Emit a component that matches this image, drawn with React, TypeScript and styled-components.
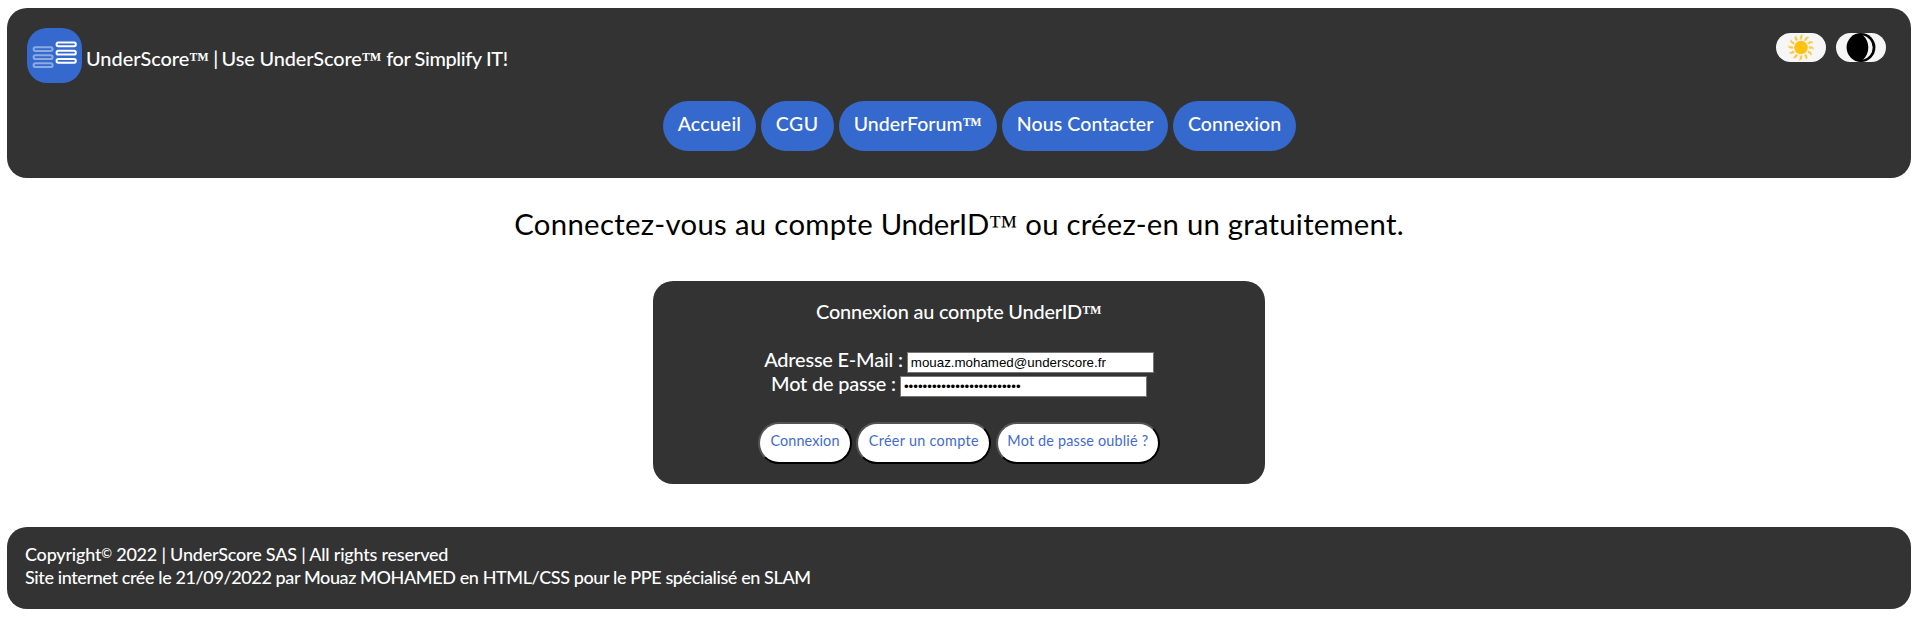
import React from "react";
import styled, { createGlobalStyle } from "styled-components";

const GlobalStyle = createGlobalStyle`
  * { box-sizing: border-box; }
  body { margin: 0; background: #fff; overflow: hidden; }
  body, button { font-family: Lato, "Liberation Sans", sans-serif; }
`;

const Page = styled.div`
  display: flex;
  flex-direction: column;
  padding: 8px 7px 0;
`;

const Panel = styled.section`
  background: #333;
  color: #fff;
  border-radius: 20px;
  font-weight: 500;
`;

const Header = styled(Panel)`
  height: 170px;
  padding: 20px 25px 0 20px;
`;

const TopRow = styled.div`
  display: flex;
  align-items: flex-start;
  height: 55px;
`;

const Title = styled.div`
  flex: 1;
  padding: 10px 0 0 4px;
  font-size: 19.9px;
  line-height: 40px;
  white-space: pre;
`;

const Spaced = styled.span<{ $ls: number }>`
  letter-spacing: ${(p) => p.$ls}px;
`;

const Mark = styled.span<{ $bold?: boolean }>`
  font-family: "Liberation Serif", serif;
  font-weight: ${(p) => (p.$bold ? 700 : 400)};
  line-height: 0;
  letter-spacing: 0;
`;

const Toggles = styled.div`
  display: flex;
  gap: 10px;
  padding-top: 5px;
`;

const Toggle = styled.button`
  width: 50px;
  height: 29px;
  padding: 0;
  border: 0;
  border-radius: 14.5px;
  background: #f6f6f6;
  overflow: hidden;
  display: block;
  svg { display: block; }
`;

const Nav = styled.nav`
  display: flex;
  justify-content: center;
  gap: 4.6px;
  margin-top: 18px;
  padding-left: 46px;
`;

const Pill = styled.a<{ $w: number; $ls: number }>`
  width: ${(p) => p.$w}px;
  height: 50px;
  border-radius: 25px;
  background: #3569cd;
  color: #fff;
  font-size: 19.5px;
  line-height: 45px;
  letter-spacing: ${(p) => p.$ls}px;
  text-align: center;
  white-space: nowrap;
`;

const Heading = styled.h1`
  margin: 26px 0 37px;
  color: #000;
  font-size: 29.3px;
  font-weight: 400;
  line-height: 40px;
  text-align: center;
  white-space: pre;
`;

const Card = styled(Panel)`
  align-self: center;
  width: 612px;
  height: 203px;
  padding-top: 18px;
  font-size: 19.9px;
  line-height: 24px;
`;

const CardTitle = styled.div`
  margin-bottom: 24px;
  text-align: center;
  letter-spacing: -0.2px;
`;

const Field = styled.label`
  display: flex;
  justify-content: center;
  height: 24px;
  gap: 4px;
  letter-spacing: -0.18px;
`;

const Input = styled.input`
  width: 247px;
  height: 21px;
  margin-top: 5px;
  padding: 0 3px;
  border: 1px solid #767676;
  border-radius: 0;
  background: #fff;
  color: #000;
  font: 13.333px "Liberation Sans", sans-serif;
  outline: 0;
`;

const Actions = styled.div`
  display: flex;
  justify-content: center;
  gap: 4.7px;
  margin-top: 27px;
`;

const Action = styled.button<{ $w: number; $ls: number }>`
  display: flex;
  justify-content: center;
  width: ${(p) => p.$w}px;
  height: 42px;
  padding: 0;
  border: 2px outset #000;
  border-radius: 21px;
  background: #fff;
  color: #3f6bd0;
  font-size: 14.4px;
  line-height: 34px;
  letter-spacing: ${(p) => p.$ls}px;
  white-space: nowrap;
`;

const Footer = styled(Panel)`
  height: 82px;
  margin-top: 43px;
  padding: 15.5px 18px 0;
  font-size: 18px;
  line-height: 23px;
`;

const Line = styled.div<{ $ls: number }>`
  letter-spacing: ${(p) => p.$ls}px;
`;

const Sup = styled.span`
  position: relative;
  top: -3px;
  font-size: 13px;
  line-height: 0;
`;

const TM = ({ bold = true }: { bold?: boolean }) => <Mark $bold={bold}>™</Mark>;

const Logo = () => (
  <svg width="55" height="55" viewBox="0 0 55 55">
    <rect width="55" height="55" rx="20" fill="#3569cd" />
    <g fill="none" strokeWidth="2">
      {[19.2, 27.3, 35.3].map((y) => (
        <rect key={y} x="6.6" y={y} width="19" height="3.8" rx="1.9" stroke="#8dabe3" />
      ))}
      {[14.5, 22.8, 31].map((y) => (
        <rect key={y} x="29.6" y={y} width="19.2" height="3.8" rx="1.7" stroke="#fff" />
      ))}
    </g>
  </svg>
);

const Sun = () => (
  <svg width="50" height="29" viewBox="-25 -14.5 50 29">
    <circle r="6.8" fill="#ffc20e" />
    {Array.from({ length: 12 }, (_, i) => (
      <path
        key={i}
        transform={`rotate(${i * 30 + 4})`}
        d="M-1.4 -7.8Q1.2 -8.4 .2 -10.2Q-.3 -11.4 .8 -12.8Q-2 -12 -1.5 -10Q-1.2 -8.8 -1.4 -7.8Z"
        fill="#ffc93a"
        stroke="#ffc93a"
        strokeWidth=".5"
      />
    ))}
  </svg>
);

const Moon = () => (
  <svg width="50" height="29" viewBox="-25 -14.5 50 29">
    <circle r="14.4" fill="#000" />
    <path d="M2 -12.3A12.65 12.65 0 0 1 2 12.3A16.9 16.9 0 0 0 2 -12.3Z" fill="#f6f6f6" />
  </svg>
);

const links = [
  { label: "Accueil", w: 93, ls: 0.2 },
  { label: "CGU", w: 73.4, ls: 0.5 },
  { label: "UnderForum", w: 158.8, ls: 0.02, tm: true },
  { label: "Nous Contacter", w: 166.6, ls: 0.1 },
  { label: "Connexion", w: 123, ls: 0.08 },
];

const actions = [
  { label: "Connexion", w: 93.6, ls: 0.13 },
  { label: "Créer un compte", w: 134.7, ls: 0.3 },
  { label: "Mot de passe oublié ?", w: 164, ls: 0.18 },
];

export default function App() {
  return (
    <Page>
      <GlobalStyle />
      <Header as="header">
        <TopRow>
          <Logo />
          <Title>
            <Spaced $ls={0}>UnderScore</Spaced><TM />
            <Spaced $ls={-0.9}> | </Spaced>
            <Spaced $ls={-0.12}>Use UnderScore</Spaced><TM />
            <Spaced $ls={-0.37}> for Simplify IT!</Spaced>
          </Title>
          <Toggles>
            <Toggle aria-label="Mode clair"><Sun /></Toggle>
            <Toggle aria-label="Mode sombre"><Moon /></Toggle>
          </Toggles>
        </TopRow>
        <Nav>
          {links.map((l) => (
            <Pill key={l.label} $w={l.w} $ls={l.ls}>{l.label}{l.tm && <TM />}</Pill>
          ))}
        </Nav>
      </Header>
      <Heading>
        <Spaced $ls={0.34}>Connectez-vous au compte </Spaced>
        <Spaced $ls={-0.3}>UnderID</Spaced><TM bold={false} />
        <Spaced $ls={0.24}> ou créez-en un gratuitement.</Spaced>
      </Heading>
      <Card>
        <CardTitle>Connexion au compte UnderID<TM /></CardTitle>
        <Field>Adresse E-Mail :<Input type="text" defaultValue="mouaz.mohamed@underscore.fr" /></Field>
        <Field>Mot de passe :<Input type="password" defaultValue="aaaaaaaaaaaaaaaaaaaaaaaaa" /></Field>
        <Actions>
          {actions.map((a) => (
            <Action key={a.label} type="button" $w={a.w} $ls={a.ls}>{a.label}</Action>
          ))}
        </Actions>
      </Card>
      <Footer as="footer">
        <Line $ls={-0.21}>Copyright<Sup>©</Sup> 2022 | UnderScore SAS | All rights reserved</Line>
        <Line $ls={-0.39}>Site internet crée le 21/09/2022 par Mouaz MOHAMED en HTML/CSS pour le PPE spécialisé en SLAM</Line>
      </Footer>
    </Page>
  );
}
